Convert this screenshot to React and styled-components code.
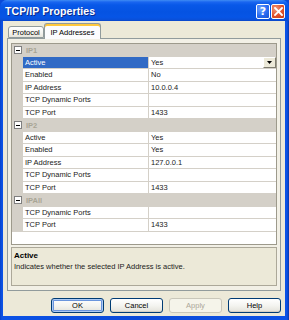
import React from 'react';
import styled, { createGlobalStyle } from 'styled-components';

const GlobalStyle = createGlobalStyle`
  html, body {
    margin: 0;
    padding: 0;
    background: #0a4ad8;
  }
  body {
    font-family: "Liberation Sans", Arial, sans-serif;
  }
`;

const sections = [
  {
    name: 'IP1',
    rows: [
      { label: 'Active', value: 'Yes', selected: true },
      { label: 'Enabled', value: 'No' },
      { label: 'IP Address', value: '10.0.0.4' },
      { label: 'TCP Dynamic Ports', value: '' },
      { label: 'TCP Port', value: '1433' },
    ],
  },
  {
    name: 'IP2',
    rows: [
      { label: 'Active', value: 'Yes' },
      { label: 'Enabled', value: 'Yes' },
      { label: 'IP Address', value: '127.0.0.1' },
      { label: 'TCP Dynamic Ports', value: '' },
      { label: 'TCP Port', value: '1433' },
    ],
  },
  {
    name: 'IPAll',
    rows: [
      { label: 'TCP Dynamic Ports', value: '' },
      { label: 'TCP Port', value: '1433' },
    ],
  },
];

const App = () => {
  return (
    <>
      <GlobalStyle />
      <Window>
        <TitleBar>
          <Title>TCP/IP Properties</Title>
          <CaptionButtons>
            <CaptionButton>
              <HelpMark>?</HelpMark>
            </CaptionButton>
            <CaptionButton $close>
              <svg width="9" height="9" viewBox="0 0 9 9">
                <path d="M1 1 L8 8 M8 1 L1 8" stroke="#fff" strokeWidth="1.8" strokeLinecap="square" />
              </svg>
            </CaptionButton>
          </CaptionButtons>
        </TitleBar>
        <Client>
          <TabStrip>
            <Tab>Protocol</Tab>
            <Tab $active>IP Addresses</Tab>
          </TabStrip>
          <Panel>
            <Grid>
              {sections.map((section) => (
                <React.Fragment key={section.name}>
                  <CategoryRow>
                    <Gutter>
                      <MinusBox />
                    </Gutter>
                    <CategoryLabel>{section.name}</CategoryLabel>
                  </CategoryRow>
                  {section.rows.map((row, index) => (
                    <PropRow key={index}>
                      <Gutter />
                      <NameCell $selected={row.selected}>{row.label}</NameCell>
                      <ValueCell>
                        <span>{row.value}</span>
                        {row.selected && (
                          <DropButton>
                            <svg width="5" height="3" viewBox="0 0 5 3">
                              <path d="M0 0 H5 L2.5 3 Z" fill="#000" />
                            </svg>
                          </DropButton>
                        )}
                      </ValueCell>
                    </PropRow>
                  ))}
                </React.Fragment>
              ))}
            </Grid>
            <Description>
              <DescTitle>Active</DescTitle>
              <DescText>Indicates whether the selected IP Address is active.</DescText>
            </Description>
          </Panel>
          <ButtonRow>
            <DialogButton $default>OK</DialogButton>
            <DialogButton>Cancel</DialogButton>
            <DialogButton disabled>Apply</DialogButton>
            <DialogButton>Help</DialogButton>
          </ButtonRow>
        </Client>
      </Window>
    </>
  );
};
export default App;

const Window = styled.div`
  width: 289px;
  height: 320px;
  display: flex;
  flex-direction: column;
  background: linear-gradient(90deg, #0842c8 0, #0b52e6 2px, #0a4ad8 50%, #0b52e6 calc(100% - 2px), #0636a8 100%);
  border-radius: 7px 7px 0 0;
  overflow: hidden;
`;

const TitleBar = styled.div`
  height: 21px;
  flex-shrink: 0;
  display: flex;
  align-items: center;
  justify-content: space-between;
  padding: 0 4px 0 5px;
  background: linear-gradient(180deg, #3f8cf3 0, #1a66f0 2px, #0858e8 5px, #0553e2 12px, #0655e6 17px, #0a4fd8 20px, #0843c4 21px);
`;

const Title = styled.span`
  color: #fff;
  font-weight: bold;
  font-size: 10.5px;
  letter-spacing: 0.1px;
  text-shadow: 1px 1px 0 #0a2a8a;
`;

const CaptionButtons = styled.div`
  display: flex;
  gap: 1px;
  margin-top: 1px;
`;

const CaptionButton = styled.div`
  width: 12px;
  height: 13px;
  border: 1px solid #fff;
  border-radius: 2px;
  display: flex;
  align-items: center;
  justify-content: center;
  background: ${(p) =>
    p.$close
      ? 'radial-gradient(circle at 30% 30%, #f29a7c 0, #e0512c 55%, #c43d17 100%)'
      : 'radial-gradient(circle at 30% 30%, #6fa2ff 0, #2a6cf0 55%, #1a50d0 100%)'};
`;

const HelpMark = styled.span`
  color: #fff;
  font-weight: bold;
  font-size: 11px;
  line-height: 1;
  font-family: "DejaVu Sans", sans-serif;
`;

const Client = styled.div`
  flex: 1;
  margin: 0 4px 4px 3px;
  background: #ece9d8;
  display: flex;
  flex-direction: column;
`;

const TabStrip = styled.div`
  height: 17px;
  display: flex;
  align-items: flex-end;
  padding-left: 5px;
  position: relative;
  z-index: 1;
`;

const Tab = styled.div`
  box-sizing: border-box;
  width: ${(p) => (p.$active ? '57px' : '36px')};
  height: ${(p) => (p.$active ? '16px' : '12px')};
  margin-bottom: ${(p) => (p.$active ? '-1px' : '0')};
  border: 1px solid #919b9c;
  border-bottom: ${(p) => (p.$active ? 'none' : '1px solid #919b9c')};
  border-radius: 3px 3px 0 0;
  background: ${(p) =>
    p.$active ? '#fcfcfe' : 'linear-gradient(180deg, #fff 0, #f3f3ef 60%, #e6e5dc 100%)'};
  box-shadow: ${(p) => (p.$active ? 'inset 0 2px 0 #ffc83c, inset 0 1px 0 #e68b2c' : 'none')};
  font-size: 7.5px;
  color: #000;
  display: flex;
  align-items: center;
  justify-content: center;
  padding-top: ${(p) => (p.$active ? '1px' : '0')};
`;

const Panel = styled.div`
  box-sizing: border-box;
  height: 253px;
  margin: 0 4px;
  border: 1px solid #919b9c;
  background: #f2f0e6;
  display: flex;
  flex-direction: column;
  padding: 4px 3px 0 3px;
`;

const Grid = styled.div`
  box-sizing: border-box;
  height: 202px;
  border: 1px solid #9d9a8c;
  background: #fff;
  display: flex;
  flex-direction: column;
`;

const PropRow = styled.div`
  box-sizing: border-box;
  height: 12.5px;
  flex-shrink: 0;
  display: grid;
  grid-template-columns: 11px 126px 1fr;
  font-size: 7.5px;
  color: #1a1a1a;
`;

const CategoryRow = styled.div`
  box-sizing: border-box;
  height: 12.5px;
  flex-shrink: 0;
  display: grid;
  grid-template-columns: 11px 1fr;
  background: #d4d0c8;
  font-size: 7.5px;
`;

const Gutter = styled.div`
  background: #d4d0c8;
  display: flex;
  align-items: center;
  justify-content: center;
`;

const MinusBox = styled.div`
  box-sizing: border-box;
  width: 8px;
  height: 8px;
  border: 1px solid #7f7f7f;
  background: #fff;
  display: flex;
  align-items: center;
  justify-content: center;
  &::after {
    content: '';
    width: 4px;
    height: 1px;
    background: #000;
  }
`;

const CategoryLabel = styled.div`
  display: flex;
  align-items: center;
  padding-left: 3px;
  font-weight: bold;
  color: #a8a595;
`;

const NameCell = styled.div`
  box-sizing: border-box;
  display: flex;
  align-items: center;
  padding-left: 2px;
  border-right: 1px solid #d4d0c8;
  border-bottom: 1px solid #d4d0c8;
  background: ${(p) => (p.$selected ? '#316ac5' : '#fff')};
  color: ${(p) => (p.$selected ? '#fff' : 'inherit')};
`;

const ValueCell = styled.div`
  box-sizing: border-box;
  display: flex;
  align-items: center;
  justify-content: space-between;
  padding-left: 2px;
  border-bottom: 1px solid #d4d0c8;
`;

const DropButton = styled.div`
  box-sizing: border-box;
  width: 13px;
  height: 11px;
  border: 1px solid;
  border-color: #fff #7f7d70 #7f7d70 #fff;
  background: #ece9d8;
  display: flex;
  align-items: center;
  justify-content: center;
  align-self: flex-start;
`;

const Description = styled.div`
  box-sizing: border-box;
  margin-top: 2px;
  height: 39px;
  border: 1px solid #aca899;
  background: #ece9d8;
  padding: 2px 2px;
  font-size: 7.5px;
  color: #000;
`;

const DescTitle = styled.div`
  font-weight: bold;
  font-size: 8px;
  line-height: 11px;
`;

const DescText = styled.div`
  line-height: 12px;
  color: #222;
`;

const ButtonRow = styled.div`
  display: flex;
  justify-content: flex-end;
  gap: 6px;
  padding: 7px 4px 0 0;
`;

const DialogButton = styled.button`
  box-sizing: border-box;
  width: 53px;
  height: 15px;
  padding: 0;
  font-family: "Liberation Sans", Arial, sans-serif;
  font-size: 7.5px;
  color: #000;
  border: 1px solid #003c74;
  border-radius: 3px;
  background: linear-gradient(180deg, #fff 0, #f4f4f0 50%, #e3e2da 100%);
  box-shadow: ${(p) => (p.$default ? 'inset 0 0 0 1px #aecbf5, inset 0 0 0 2px #6a95dd' : 'inset 0 -1px 0 #d6d0c5')};
  &:disabled {
    color: #aca899;
    border-color: #c9c7ba;
    background: #f5f4ea;
    box-shadow: none;
  }
`;
